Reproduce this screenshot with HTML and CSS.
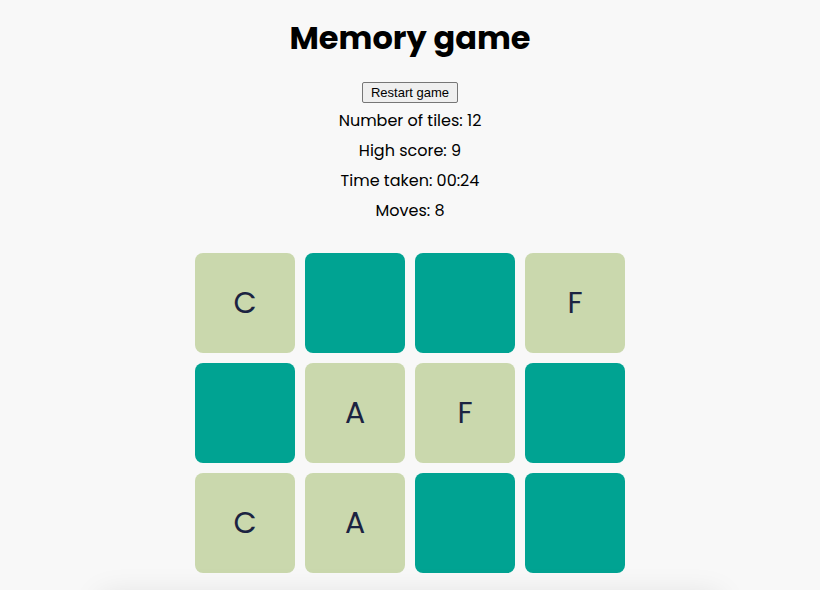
FILE: index.html
```html
<!DOCTYPE html>
<html>
<head>
<meta charset="utf-8">
<link rel="stylesheet" href="styles.css">
</head>
<body>
<main class="app">
  <h1 class="title">Memory game</h1>
  <button class="restart">Restart game</button>
  <div class="stats">
    <div class="stat">Number of tiles: 12</div>
    <div class="stat">High score: 9</div>
    <div class="stat">Time taken: 00:24</div>
    <div class="stat">Moves: 8</div>
  </div>
  <div class="board">
    <div class="tile open">C</div>
    <div class="tile"></div>
    <div class="tile"></div>
    <div class="tile open">F</div>
    <div class="tile"></div>
    <div class="tile open">A</div>
    <div class="tile open">F</div>
    <div class="tile"></div>
    <div class="tile open">C</div>
    <div class="tile open">A</div>
    <div class="tile"></div>
    <div class="tile"></div>
  </div>
  <div class="footer"></div>
</main>
</body>
</html>
```
FILE: styles.css
```css
html, body {
  margin: 0;
  padding: 0;
  background: #f8f8f8;
  overflow: hidden;
}
body {
  font-family: "Poppins", "Inter", "Noto Sans", sans-serif;
  color: #000;
}
.app {
  display: flex;
  flex-direction: column;
  align-items: center;
  padding-top: 16px;
}
.title {
  margin: 0;
  font-size: 32px;
  line-height: 44px;
  font-weight: 700;
}
.restart {
  margin-top: 22px;
  font-family: "Liberation Sans", Arial, sans-serif;
  font-size: 13px;
  line-height: 15px;
  padding: 2px 8px;
  border: 1px solid #767676;
  border-radius: 2px;
  background: #efefef;
  color: #000;
}
.stats {
  margin-top: 3px;
  display: flex;
  flex-direction: column;
  align-items: center;
}
.stat {
  font-size: 16px;
  line-height: 30px;
}
.board {
  margin-top: 27px;
  display: grid;
  grid-template-columns: repeat(4, 100px);
  grid-auto-rows: 100px;
  gap: 10px;
}
.tile {
  background: #00a392;
  border-radius: 8px;
  display: flex;
  align-items: center;
  justify-content: center;
  font-size: 30px;
  color: #1b2341;
}
.tile.open {
  background: #cad8ad;
}
.footer {
  margin-top: 22px;
  width: 620px;
  height: 60px;
  background: #f8f8f8;
  box-shadow: 0 0 30px rgba(0, 0, 0, 0.1);
}
```
